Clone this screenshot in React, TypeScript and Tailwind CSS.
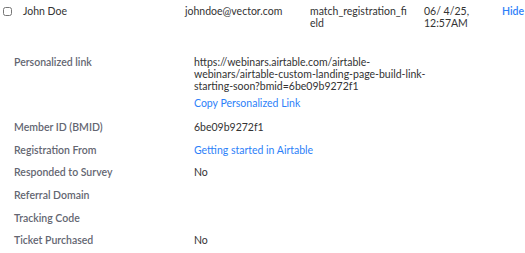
import React from "react"

const rows: { label: string; value?: string; link?: boolean }[] = [
  { label: "Member ID (BMID)", value: "6be09b9272f1" },
  { label: "Registration From", value: "Getting started in Airtable", link: true },
  { label: "Responded to Survey", value: "No" },
  { label: "Referral Domain" },
  { label: "Tracking Code" },
  { label: "Ticket Purchased", value: "No" },
]

export default function App() {
  return (
    <div className="w-[525px] h-[253px] bg-white text-[10.5px] text-[#333333] overflow-hidden" style={{ fontFamily: "Lato, 'Noto Sans', sans-serif" }}>
      {/* header row */}
      <div className="flex items-start pt-[5px] leading-[12px]">
        <div className="w-[23px] pl-[3px] pt-[1px]">
          <input type="checkbox" className="w-[9px] h-[9px] m-0 accent-gray-400" />
        </div>
        <div className="w-[162px]">John Doe</div>
        <div className="w-[125px]">johndoe@vector.com</div>
        <div className="w-[114px] pr-[17px] break-all">match_registration_field</div>
        <div className="w-[78px] pr-[20px]">06/ 4/25, 12:57AM</div>
        <div className="font-semibold text-[#2d7ff9]">Hide</div>
      </div>

      {/* details */}
      <div className="pl-[14px] pt-[27px]">
        <div className="flex leading-[12px]">
          <div className="w-[180px] font-semibold text-[#636671]">Personalized link</div>
          <div className="w-[245px]">
            <div className="break-words">https://webinars.airtable.com/airtable-webinars/airtable-custom-landing-page-build-link-starting-soon?bmid=6be09b9272f1</div>
            <div className="mt-[5px] text-[#2d7ff9]">Copy Personalized Link</div>
          </div>
        </div>
        <div className="flex flex-col gap-[10.7px] mt-[12px] leading-[12px]">
          {rows.map(r => (
            <div key={r.label} className="flex">
              <div className="w-[180px] font-semibold text-[#636671]">{r.label}</div>
              <div className={r.link ? "text-[#2d7ff9]" : ""}>{r.value ?? "\u00a0"}</div>
            </div>
          ))}
        </div>
      </div>
    </div>
  )
}
